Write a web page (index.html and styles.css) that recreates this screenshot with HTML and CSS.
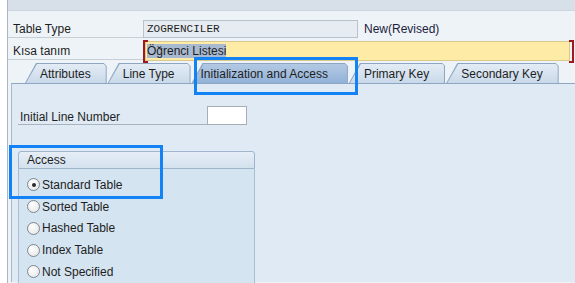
FILE: index.html
```html
<!DOCTYPE html>
<html>
<head>
  <meta charset="UTF-8">
  <link rel="stylesheet" href="styles.css">
  <title>Table Type ZOGRENCILER</title>
</head>
<body>
  <div class="window">
    <div class="topbar"></div>

    <div class="header">
      <div class="row">
        <div class="label">Table Type</div>
        <div class="field field-readonly">ZOGRENCILER</div>
        <div class="status">New(Revised)</div>
      </div>
      <div class="row">
        <div class="label">Kısa tanım</div>
        <div class="required">
          <div class="field field-edit"><span class="selected">Öğrenci Listesi</span></div>
        </div>
      </div>
    </div>

    <div class="tabs">
      <div class="tab"><span>Attributes</span></div>
      <div class="tab"><span>Line Type</span></div>
      <div class="tab tab-active"><span>Initialization and Access</span></div>
      <div class="tab"><span>Primary Key</span></div>
      <div class="tab"><span>Secondary Key</span></div>
    </div>

    <div class="panel">
      <div class="line-row">
        <div class="line-label">Initial Line Number</div>
        <div class="small-input"></div>
      </div>

      <div class="group">
        <div class="group-title">Access</div>
        <div class="group-body">
          <div class="radio-row"><span class="radio checked"></span>Standard Table</div>
          <div class="radio-row"><span class="radio"></span>Sorted Table</div>
          <div class="radio-row"><span class="radio"></span>Hashed Table</div>
          <div class="radio-row"><span class="radio"></span>Index Table</div>
          <div class="radio-row"><span class="radio"></span>Not Specified</div>
        </div>
      </div>
    </div>
  </div>

  <!-- annotation frames drawn over the screen -->
  <div class="mark mark-tab"></div>
  <div class="mark mark-access"></div>
</body>
</html>
```

FILE: styles.css
```css
  body {
    margin: 0;
    height: 283px;
    background: #ffffff;
    font-family: "Liberation Sans", Arial, sans-serif;
    font-size: 12px;
    color: #1e1e1e;
    overflow: hidden;
  }

  .window {
    margin-left: 7px;
    border-left: 1px solid #aab6c2;
    height: 283px;
    background: #eef3f7;
  }

  .topbar {
    height: 10px;
    background: #d7e0e9;
    border-bottom: 1px solid #cdd6df;
  }

  .header {
    padding-top: 8px;
  }

  .row {
    display: flex;
    align-items: flex-start;
    height: 21px;
    margin-bottom: 1px;
  }

  .label {
    width: 130px;
    padding-left: 5px;
    height: 18px;
    line-height: 21px;
    border-bottom: 1px solid #c6ced6;
  }

  .field {
    box-sizing: border-box;
    padding-left: 3px;
  }

  .field-readonly {
    width: 215px;
    height: 18px;
    line-height: 16px;
    margin-top: 1px;
    border: 1px solid #b8c2cc;
    background: #e6ecf1;
    font-family: "Liberation Mono", "Courier New", monospace;
    font-size: 11px;
  }

  .status {
    margin-left: 6px;
    line-height: 21px;
    color: #1c1c3c;
  }

  .required {
    position: relative;
    padding: 0 4px 0 2px;
  }

  .required::before,
  .required::after {
    content: "";
    position: absolute;
    top: -1px;
    bottom: -2px;
    width: 3px;
    border: 2px solid #a0191e;
  }

  .required::before {
    left: 0;
    border-right: none;
  }

  .required::after {
    right: 0;
    border-left: none;
  }

  .field-edit {
    width: 425px;
    height: 20px;
    line-height: 19px;
    padding-left: 1px;
    border: 1px solid #d9ca8c;
    background: #fdeba6;
  }

  .selected {
    background: #a8bad2;
  }

  .tabs {
    display: flex;
    gap: 1px;
    margin-top: 1px;
    padding-left: 17px;
    height: 20px;
  }

  .tab {
    height: 20px;
    background: #8ea6c2;
    clip-path: polygon(11px 0, calc(100% - 3px) 0, 100% 3px, 100% 100%, 0 100%);
  }

  .tab span {
    display: block;
    height: 19px;
    margin: 1px 1px 0 1px;
    padding: 0 15px 0 14px;
    line-height: 21px;
    background: linear-gradient(#e3ecf5, #c9d9ea);
    clip-path: polygon(11px 0, calc(100% - 2px) 0, 100% 2px, 100% 100%, 0 100%);
    white-space: nowrap;
  }

  .tab-active span {
    padding: 0 19px 0 8px;
    background: linear-gradient(#b3c9e3, #92b2d8);
  }

  .panel {
    box-sizing: border-box;
    margin-left: 3px;
    height: 199px;
    border-top: 1px solid #8ea6c2;
    border-left: 1px solid #a9b9ca;
    background: #dfeaf4;
    padding: 22px 0 0 6px;
  }

  .line-row {
    display: flex;
    align-items: flex-end;
  }

  .line-label {
    width: 187px;
    padding-left: 2px;
    height: 18px;
    line-height: 22px;
    border-bottom: 1px solid #a9b3bd;
  }

  .small-input {
    width: 40px;
    height: 19px;
    box-sizing: border-box;
    border: 1px solid #a7aeb5;
    background: #ffffff;
  }

  .group {
    width: 237px;
    margin-top: 26px;
  }

  .group-title {
    height: 16px;
    line-height: 16px;
    padding-left: 8px;
    border: 1px solid #9eb5cd;
    border-radius: 3px 3px 0 0;
    background: linear-gradient(#e6eef7, #d3e1ee);
  }

  .group-body {
    height: 120px;
    padding-top: 5px;
    border-left: 1px solid #a9bdd2;
    border-right: 1px solid #a9bdd2;
    background: #d5e4f1;
  }

  .radio-row {
    display: flex;
    align-items: center;
    height: 21.75px;
    padding-left: 8px;
  }

  .radio {
    width: 11px;
    height: 11px;
    margin-right: 2px;
    border: 1px solid #7c8792;
    border-radius: 50%;
    background: radial-gradient(circle at 40% 35%, #ffffff, #e2e2e2);
    position: relative;
  }

  .radio.checked::after {
    content: "";
    position: absolute;
    left: 3.5px;
    top: 3.5px;
    width: 4px;
    height: 4px;
    border-radius: 50%;
    background: #2a2a2a;
  }

  .mark {
    position: absolute;
    border: 3px solid #1282f4;
    box-sizing: border-box;
  }

  .mark-tab {
    left: 194px;
    top: 57px;
    width: 164px;
    height: 38px;
  }

  .mark-access {
    left: 9px;
    top: 145px;
    width: 154px;
    height: 54px;
  }
```
